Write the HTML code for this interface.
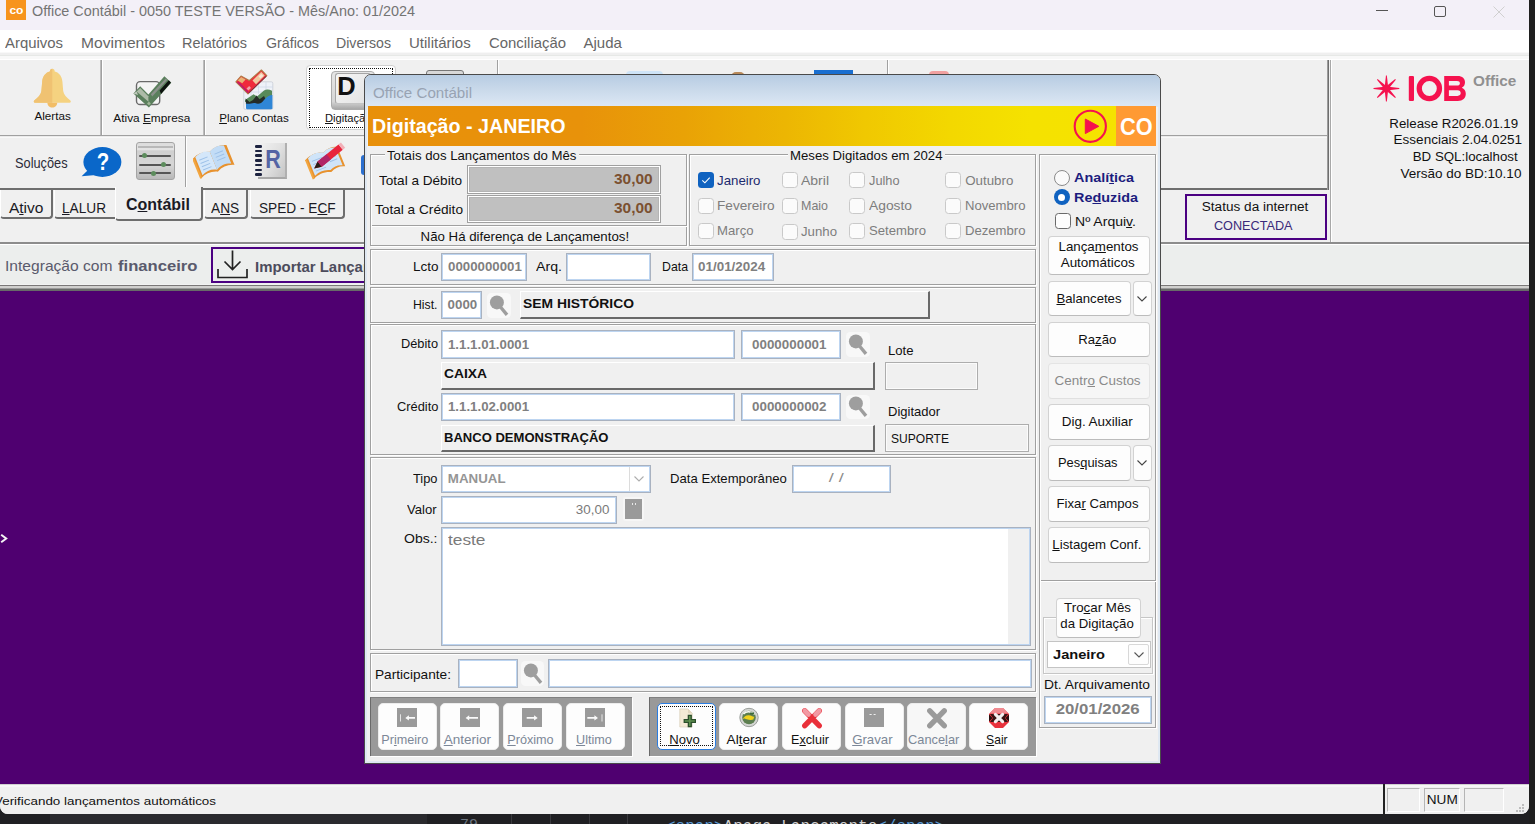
<!DOCTYPE html>
<html><head><meta charset="utf-8"><title>Office Contábil</title><style>
html,body{margin:0;padding:0;background:#1f1f1f;}
body{width:1535px;height:824px;position:relative;overflow:hidden;font-family:"Liberation Sans",sans-serif;}
div,span.t,svg.a{position:absolute;box-sizing:border-box;}
span.t{white-space:nowrap;display:block;}
u{text-decoration:underline;text-underline-offset:1px}
</style></head><body>
<div style="left:0px;top:0px;width:1535px;height:824px;background:#1f1f1f"></div>
<div style="left:0px;top:806px;width:1529px;height:18px;background:#202023"></div>
<div style="left:50px;top:806px;width:377px;height:18px;background:#2a2a2e"></div>
<div style="left:511px;top:806px;width:1px;height:18px;background:#3a3a3e"></div>
<div style="left:550px;top:806px;width:1px;height:18px;background:#3a3a3e"></div>
<div style="left:589px;top:806px;width:1px;height:18px;background:#3a3a3e"></div>
<div style="left:627px;top:806px;width:1px;height:18px;background:#3a3a3e"></div>
<div style="left:655px;top:814px;width:300px;height:10px;overflow:hidden"><span style="position:absolute;left:11px;top:4px;font:16px/18px 'Liberation Mono',monospace;white-space:nowrap;color:#d0d0d0"><span style="color:#5b9bd5">&lt;span&gt;</span>Apaga Lançamento<span style="color:#5b9bd5">&lt;/span&gt;</span></span></div>
<div style="left:455px;top:814px;width:30px;height:10px;overflow:hidden"><span style="position:absolute;left:5px;top:3px;font:15px/18px 'Liberation Mono',monospace;color:#6e7681">79</span></div>
<div style="left:0px;top:0px;width:1529px;height:814px;background:#f0f0f0;border-radius:0 0 8px 8px;overflow:hidden"></div>
<div style="left:0px;top:0px;width:1529px;height:30px;background:#f3f0f8"></div>
<div style="left:6px;top:0px;width:20px;height:20px;background:#f7941d"></div>
<span class="t" style="top:3.00px;font-size:11px;line-height:14px;color:#fff;font-weight:700;left:9.58px;transform:scaleX(1.0900);transform-origin:50% 50%;">co</span>
<span class="t" style="top:0.80px;font-size:15px;line-height:19px;color:#747474;left:32px;transform:scaleX(0.9604);transform-origin:0 50%;">Office Contábil - 0050 TESTE VERSÃO - Mês/Ano: 01/2024</span>
<div style="left:1376px;top:10px;width:12px;height:1px;background:#555"></div>
<div style="left:1434px;top:5.5px;width:11.5px;height:11.5px;border:1px solid #555;border-radius:2px"></div>
<svg class="a" style="left:1493px;top:5.500px" width="12" height="12"><path d="M0.5 0.5L11.5 11.5M11.5 0.5L0.5 11.5" stroke="#d0d0d0" stroke-width="1" fill="none"/></svg>
<div style="left:0px;top:30px;width:1529px;height:22px;background:#fff"></div>
<div style="left:0px;top:52px;width:1529px;height:1px;background:#f8f8f8"></div>
<div style="left:0px;top:53px;width:1529px;height:2px;background:#efefef"></div>
<div style="left:0px;top:55px;width:1529px;height:1px;background:#e6e8e6"></div>
<div style="left:0px;top:56px;width:1529px;height:3px;background:#f8f8f8"></div>
<div style="left:0px;top:59px;width:1529px;height:1px;background:#fff"></div>
<span class="t" style="top:32.70px;font-size:15px;line-height:19px;color:#666;left:5px;transform:scaleX(0.9938);transform-origin:0 50%;">Arquivos</span>
<span class="t" style="top:32.70px;font-size:15px;line-height:19px;color:#666;left:81px;transform:scaleX(1.0388);transform-origin:0 50%;">Movimentos</span>
<span class="t" style="top:32.70px;font-size:15px;line-height:19px;color:#666;left:182px;transform:scaleX(0.9625);transform-origin:0 50%;">Relatórios</span>
<span class="t" style="top:32.70px;font-size:15px;line-height:19px;color:#666;left:265.5px;transform:scaleX(0.9488);transform-origin:0 50%;">Gráficos</span>
<span class="t" style="top:32.70px;font-size:15px;line-height:19px;color:#666;left:336px;transform:scaleX(0.9424);transform-origin:0 50%;">Diversos</span>
<span class="t" style="top:32.70px;font-size:15px;line-height:19px;color:#666;left:409px;">Utilitários</span>
<span class="t" style="top:32.70px;font-size:15px;line-height:19px;color:#666;left:489px;transform:scaleX(0.9929);transform-origin:0 50%;">Conciliação</span>
<span class="t" style="top:32.70px;font-size:15px;line-height:19px;color:#666;left:583.5px;">Ajuda</span>
<div style="left:100px;top:60px;width:1px;height:75px;background:#bcbcbc"></div>
<div style="left:101px;top:60px;width:1px;height:75px;background:#a0a0a0"></div>
<div style="left:102px;top:60px;width:1px;height:76px;background:#fff"></div>
<div style="left:203px;top:60px;width:1px;height:75px;background:#bcbcbc"></div>
<div style="left:204px;top:60px;width:1px;height:75px;background:#a0a0a0"></div>
<div style="left:205px;top:60px;width:1px;height:76px;background:#fff"></div>
<div style="left:0px;top:135px;width:1327px;height:1px;background:#a0a0a0"></div>
<div style="left:0px;top:136px;width:1327px;height:1px;background:#ebebeb"></div>
<div style="left:0px;top:137px;width:1327px;height:1px;background:#f8f8f8"></div>
<div style="left:185px;top:136px;width:1px;height:51px;background:#a0a0a0"></div>
<div style="left:186px;top:136px;width:1px;height:51px;background:#fff"></div>
<div style="left:186px;top:188px;width:1143px;height:2px;background:#6e6e6e"></div>
<div style="left:1327px;top:60px;width:1px;height:130px;background:#9c9c9c"></div>
<div style="left:1328px;top:60px;width:1px;height:130px;background:#6e6e6e"></div>
<div style="left:1330px;top:60px;width:1px;height:182px;background:#a8a8a8"></div>
<div style="left:1331px;top:60px;width:1px;height:182px;background:#fff"></div>
<div style="left:0px;top:242px;width:1529px;height:2px;background:#8c8c8c"></div>
<div style="left:0px;top:244px;width:1529px;height:1px;background:#fff"></div>
<div style="left:0px;top:245px;width:1529px;height:39px;background:#eceeed"></div>
<div style="left:0px;top:284px;width:1529px;height:1px;background:#f2f3f3"></div>
<div style="left:0px;top:285px;width:1529px;height:1px;background:#7a7878"></div>
<div style="left:0px;top:286px;width:1529px;height:2px;background:#d0d0ce"></div>
<div style="left:0px;top:288px;width:1529px;height:1px;background:#9a9a9a"></div>
<div style="left:0px;top:289px;width:1529px;height:2px;background:#686a68"></div>
<div style="left:0px;top:291px;width:1529px;height:493px;background:#4f0070"></div>
<div style="left:0px;top:784px;width:1529px;height:30px;background:#f0f0f0;border-radius:0 0 8px 8px"></div>
<div style="left:0px;top:784px;width:1529px;height:1px;background:#cfcfcf"></div>
<div style="left:0px;top:785px;width:1529px;height:2px;background:#f6f6f6"></div>
<svg class="a" style="left:33px;top:68px" width="39" height="40" viewBox="0 0 39 40">
<path d="M19.300 0.800c1.500 0 2.400 1 2.400 2.600c4.600 1.200 7.300 5 7.700 10.200l0.800 9.500c0.400 3.600 3.400 6.700 7.200 9.400c0.800 0.800 0.400 2.200-0.800 2.200H2c-1.200 0-1.600-1.400-0.800-2.200c3.800-2.700 6.800-5.800 7.200-9.400l0.800-9.500c0.400-5.200 3.100-9 7.700-10.200c0-1.600 0.900-2.600 2.400-2.600z" fill="#f5d280"/>
<path d="M19.300 0.800c-1.500 0-2.400 1-2.400 2.600c-4.600 1.200-7.300 5-7.700 10.200l-0.800 9.500c-0.400 3.600-3.400 6.700-7.200 9.400c-0.800 0.800-0.400 2.200 0.800 2.200H19.300z" fill="#f0c272"/>
<path d="M14.400 34.700h9.800c0 2.800-2.200 4.800-4.900 4.800s-4.900-2-4.900-4.800z" fill="#f2bd66"/></svg>
<span class="t" style="top:109.00px;font-size:11.33px;line-height:14px;color:#111;left:35.17px;transform:scaleX(1.0293);transform-origin:50% 50%;">Alertas</span>
<svg class="a" style="left:132px;top:76px" width="42" height="33" viewBox="0 0 42 33">
<rect x="4.500" y="5.600" width="23.200" height="22.900" rx="3.600" fill="#f4f4f4" stroke="#6a6a6a" stroke-width="1.400"/>
<path d="M1.400 17.400L8.200 10.300L16.400 18.500L32.400 0.300L39.300 6.700L16.900 31.500z" fill="#5a7f5c"/>
<path d="M27.600 14.400L36.800 4.200L38.900 6.600L29.100 18z" fill="#0c120e"/>
<path d="M18.900 18.200L33.700 2.400L35.200 3.900L20.200 20.400z" fill="#8b918b"/>
<path d="M4.600 15.600L8.200 12L16.300 20.200L16.500 25.800z" fill="#aebba8"/>
<path d="M1.400 17.400L4.600 15.600L6 19z" fill="#c0c8bc"/>
<path d="M15 27.500L17 25.500L18.800 27.500L17 29.500z" fill="#9fb596"/></svg>
<span class="t" style="top:111.30px;font-size:11.33px;line-height:14px;color:#111;left:115.36px;transform:scaleX(1.0450);transform-origin:50% 50%;">Ativa <u>E</u>mpresa</span>
<svg class="a" style="left:234px;top:68.8px" width="41" height="42" viewBox="0 0 41 42">
<rect x="9.800" y="12.800" width="29" height="27.600" rx="1.500" fill="#eef2f8" stroke="#c9cdd6" stroke-width="0.800"/>
<path d="M10 18h29M10 23h29M17 13v14M24.500 13v12M32 13v9" stroke="#cfd9e8" stroke-width="0.800"/>
<path d="M11 31L19.500 25.200L23 27.500L30 21.500C32 20 35 20 38 21.800V33H11z" fill="#578a5a"/>
<path d="M11.600 29.500L15.500 33L19 31L22.500 26.500L25.500 30.200L30 27L32 31L24 37.500L12 36z" fill="#242c28"/>
<path d="M12 34.600C16 35.500 18 33.500 21 34C24 35.500 27 35 30 31C33 27.500 35.500 26 38.400 26V39C38.400 39.800 38 40.200 37.200 40.200H13.200C12.400 40.200 12 39.800 12 39z" fill="#2f86d6"/>
<path d="M1.900 12.800L7 7L15.200 11.600L27.400 1L32.800 6.700L14 24.900z" fill="#f02a3c" stroke="#b07a44" stroke-width="1.100" stroke-linejoin="round"/>
<path d="M2.400 13L5.600 13.600L14.200 22.200L14 24.300z" fill="#c01a6c"/>
<path d="M14.600 23.600L32 7l0.500 0.500L14.600 24.600z" fill="#7a1040"/>
<path d="M3.800 11.400L7.100 8L11.600 10.600L8.200 14.200z" fill="#e9b477"/>
<path d="M18.500 11.600L27.300 2.800L30.800 6.500L22 15.200z" fill="#f0c8a0"/>
<path d="M24.500 7.500l2.800-2.700l2 2.100-2.800 2.700z" fill="#f8ead8"/>
<path d="M12.500 19.500l2.700-2.500l1.800 1.900-2.700 2.500z" fill="#f2a0a8"/></svg>
<span class="t" style="top:111.30px;font-size:11.33px;line-height:14px;color:#111;left:220.48px;transform:scaleX(1.0245);transform-origin:50% 50%;"><u>P</u>lano Contas</span>
<div style="left:305.5px;top:64.8px;width:90px;height:65.7px;background:#fff;border:1px solid #d0d0d0;border-radius:4px"></div>
<div style="left:308.5px;top:68px;width:84px;height:59.5px;border:1px dotted #111"></div>
<div style="left:331px;top:70.5px;width:44px;height:39px;background:linear-gradient(180deg,#e6e6e6,#d6d6d6 80%,#a8a8a8);border-radius:4px;border:1px solid #ababab"></div>
<div style="left:335px;top:72.5px;width:36px;height:31px;background:linear-gradient(135deg,#f6f6f6,#e2e2e2);border-radius:3px;border:1px solid #a6a6a6;border-bottom-color:#c4c4c4;border-right-color:#c4c4c4"></div>
<span class="t" style="top:69.50px;font-size:26.5px;line-height:33px;color:#111;font-weight:700;left:337.33px;transform:scaleX(0.9613);transform-origin:50% 50%;">D</span>
<span class="t" style="top:111.30px;font-size:11.33px;line-height:14px;color:#111;left:325.2px;transform:scaleX(0.9845);transform-origin:0 50%;"><u>D</u>igitação</span>
<div style="left:426px;top:70px;width:38px;height:8px;border:1.500px solid #777;border-radius:3px;background:#d8d8d8"></div>
<div style="left:626px;top:70.5px;width:37px;height:8px;background:#cfe4f7;border-radius:4px 4px 0 0"></div>
<div style="left:731px;top:71.5px;width:14px;height:6px;background:#b98a5a;border-radius:5px 5px 0 0"></div>
<div style="left:814px;top:69.5px;width:39px;height:8px;background:#1a6fd0"></div>
<div style="left:928.5px;top:71px;width:20px;height:7px;background:#f0a0a0;border-radius:4px 4px 0 0"></div>
<div style="left:497px;top:60px;width:1px;height:75px;background:#a0a0a0"></div>
<div style="left:498px;top:60px;width:1px;height:75px;background:#fff"></div>
<div style="left:887px;top:60px;width:1px;height:75px;background:#a0a0a0"></div>
<div style="left:888px;top:60px;width:1px;height:75px;background:#fff"></div>
<span class="t" style="top:153.60px;font-size:14px;line-height:18px;color:#2b2b38;left:15px;transform:scaleX(0.9133);transform-origin:0 50%;">Soluções</span>
<svg class="a" style="left:80px;top:146px" width="43" height="33" viewBox="0 0 43 33">
<ellipse cx="22.400" cy="16" rx="19" ry="15" fill="#0a67c9"/>
<path d="M8 24L1.600 30.300L16 29z" fill="#0a67c9"/></svg>
<span class="t" style="top:147.80px;font-size:23px;line-height:29px;color:#fff;font-weight:700;left:95.57px;transform:scaleX(0.8889);transform-origin:50% 50%;">?</span>
<div style="left:135.5px;top:141.5px;width:39px;height:38.5px;background:linear-gradient(180deg,#dcdcdc 0,#e4e4e4 18%,#cfcfcf 22%,#d6d6d6 60%,#b8b8b8 100%);border:1px solid #a4a4a4;border-radius:3px"></div>
<div style="left:137.5px;top:145.5px;width:35px;height:2px;background:#b9b9b9"></div>
<div style="left:139.2px;top:154.8px;width:31.6px;height:2px;background:#555;border-radius:1px"></div>
<div style="left:141.6px;top:153.20000000000002px;width:5.2px;height:5.2px;background:#5c8c5c;border-radius:50%"></div>
<div style="left:139.2px;top:163.7px;width:31.6px;height:2px;background:#555;border-radius:1px"></div>
<div style="left:160.8px;top:162.1px;width:5.2px;height:5.2px;background:#5c8c5c;border-radius:50%"></div>
<div style="left:139.2px;top:172.1px;width:31.6px;height:2px;background:#555;border-radius:1px"></div>
<div style="left:150.9px;top:170.5px;width:5.2px;height:5.2px;background:#5c8c5c;border-radius:50%"></div>
<svg class="a" style="left:193px;top:142px" width="44" height="40" viewBox="0 0 44 40">
<g transform="rotate(-22 22 20)">
<path d="M3 8.500c6-3 12-3 18 0c6-3 12-3 18 0V30c-6-3-12-3-18 0c-6-3-12-3-18 0z" fill="#e8922e"/>
<path d="M5.500 8c5.500-2.500 10.500-2.500 15.500 0.500V28c-5-3-10-3-15.500-0.500z" fill="#d4e7fa"/>
<path d="M21 8.500c5-3 10-3 15.500-0.500V27.500c-5.500-2.500-10.500-2.500-15.500 0.500z" fill="#c2dcf6"/>
<path d="M8 12.500h9M8 16h9M8 19.500h9M8 23h9M24.500 12.500h9M24.500 16h9M24.500 19.500h9" stroke="#9cc0e8" stroke-width="0.9"/>
<path d="M3 8.500V30" stroke="#f2a640" stroke-width="2"/>
</g></svg>
<div style="left:258px;top:142.5px;width:29px;height:36.5px;background:linear-gradient(120deg,#f2f2f2 0,#e0e0e0 55%,#c4c4c4 100%);border-right:2px solid #b0b0b0;border-bottom:2px solid #a8a8a8"></div>
<div style="left:254.7px;top:145.0px;width:7.5px;height:2.6px;background:#1d2340;border-radius:1.3px"></div>
<div style="left:254.7px;top:149.7px;width:7.5px;height:2.6px;background:#1d2340;border-radius:1.3px"></div>
<div style="left:254.7px;top:154.4px;width:7.5px;height:2.6px;background:#1d2340;border-radius:1.3px"></div>
<div style="left:254.7px;top:159.1px;width:7.5px;height:2.6px;background:#1d2340;border-radius:1.3px"></div>
<div style="left:254.7px;top:163.8px;width:7.5px;height:2.6px;background:#1d2340;border-radius:1.3px"></div>
<div style="left:254.7px;top:168.5px;width:7.5px;height:2.6px;background:#1d2340;border-radius:1.3px"></div>
<div style="left:254.7px;top:173.2px;width:7.5px;height:2.6px;background:#1d2340;border-radius:1.3px"></div>
<span class="t" style="top:143.90px;font-size:25px;line-height:31px;color:#5464a4;font-weight:700;left:263.97px;transform:scaleX(0.8581);transform-origin:50% 50%;">R</span>
<svg class="a" style="left:304.5px;top:139.5px" width="45" height="43" viewBox="0 0 45 43">
<g transform="rotate(-22 22 24)">
<path d="M4 12c6-3 13-3 19 0c5-2.500 10-2.500 15 0V33c-5-2.500-10-2.500-15 0c-6-3-13-3-19 0z" fill="#e8922e"/>
<path d="M6.500 11.500c5.500-2.500 11-2.500 16.500 0.500c4.500-2.300 8.500-2.300 13 0V31c-4.500-2.300-8.500-2.300-13 0c-5.500-3-11-3-16.500-0.500z" fill="#cfe4f9"/>
<path d="M9 16h11M9 19.500h11M9 23h11M9 26.500h11M25.500 19.500h8M25.500 23h8" stroke="#9cc0e8" stroke-width="0.9"/>
<path d="M4 12V33" stroke="#f2a640" stroke-width="2"/>
</g>
<path d="M9.200 28.500L12.600 21.500L33.500 4.500L37.800 9.800L16.800 26.800z" fill="#e8243c"/>
<path d="M9.200 28.500L12.600 21.500L16.800 26.800z" fill="#2a2018"/>
<path d="M12.600 21.500l9-7.300l4.200 5.300-9 7.300z" fill="#b02468"/>
<path d="M33.500 4.500l2.400-2l4.300 5.300-2.400 2z" fill="#f2b0b8"/></svg>
<div style="left:360.5px;top:154.5px;width:6px;height:20px;background:#2a6fd0;border-radius:3px 0 0 3px"></div>
<div style="left:0px;top:188px;width:114.5px;height:2px;background:#6e6e6e"></div>
<div style="left:0px;top:190px;width:52.5px;height:28.5px;background:#f0f0f0;border-right:2px solid #6e6e6e;border-bottom:2px solid #6e6e6e;border-left:1px solid #fff;border-radius:0 0 4px 4px;"></div>
<div style="left:54px;top:190px;width:60.5px;height:28.5px;background:#f0f0f0;border-bottom:2px solid #6e6e6e;border-left:1px solid #fff;border-radius:0 0 0 4px"></div>
<div style="left:204px;top:190px;width:44px;height:28.5px;background:#f0f0f0;border-right:2px solid #6e6e6e;border-bottom:2px solid #6e6e6e;border-left:1px solid #fff;border-radius:0 0 4px 4px;"></div>
<div style="left:250px;top:190px;width:94.5px;height:28.5px;background:#f0f0f0;border-right:2px solid #6e6e6e;border-bottom:2px solid #6e6e6e;border-left:1px solid #fff;border-radius:0 0 4px 4px;"></div>
<div style="left:114.5px;top:187px;width:88.5px;height:34px;background:#f0f0f0;border-right:2px solid #6e6e6e;border-bottom:2px solid #6e6e6e;border-left:1px solid #fff;border-radius:0 0 4px 4px"></div>
<span class="t" style="top:197.50px;font-size:15.5px;line-height:19px;color:#1a1a24;left:8.9px;">A<u>t</u>ivo</span>
<span class="t" style="top:197.50px;font-size:15.5px;line-height:19px;color:#1a1a24;left:62px;transform:scaleX(0.8803);transform-origin:0 50%;"><u>L</u>ALUR</span>
<span class="t" style="top:194.60px;font-size:16px;line-height:20px;color:#1a1a24;font-weight:700;left:126px;">C<u>o</u>ntábil</span>
<span class="t" style="top:197.50px;font-size:15.5px;line-height:19px;color:#1a1a24;left:211px;transform:scaleX(0.8843);transform-origin:0 50%;">A<u>N</u>S</span>
<span class="t" style="top:197.50px;font-size:15.5px;line-height:19px;color:#1a1a24;left:258.7px;transform:scaleX(0.8816);transform-origin:0 50%;">SPED - E<u>C</u>F</span>
<span class="t" style="top:255.50px;font-size:15px;line-height:19px;color:#5a5a6c;left:5px;transform:scaleX(1.0397);transform-origin:0 50%;">Integração com</span>
<span class="t" style="top:255.50px;font-size:15px;line-height:19px;color:#5a5a6c;font-weight:700;left:117.8px;transform:scaleX(1.1090);transform-origin:0 50%;">financeiro</span>
<div style="left:211px;top:247px;width:200px;height:35.5px;border:2px solid #4b0082;background:#eceeed"></div>
<svg class="a" style="left:217px;top:249px" width="31" height="30" viewBox="0 0 31 30"><path d="M15.5 1.500V20M7.500 12.500L15.500 20.500L23.500 12.500" stroke="#222" stroke-width="1.700" fill="none"/><path d="M1 20V28.500H30V20" stroke="#222" stroke-width="1.700" fill="none"/></svg>
<span class="t" style="top:256.50px;font-size:15px;line-height:19px;color:#4c4c5c;font-weight:700;left:254.5px;transform:scaleX(0.9956);transform-origin:0 50%;">Importar Lançamentos</span>
<svg class="a" style="left:1372px;top:74px" width="30" height="30" viewBox="0 0 30 30"><g transform="translate(14.400 14.500)" fill="#f5124e"><path d="M-1.900 0L-0.450 -12.900L0.450 -12.900L1.900 0z" transform="rotate(0)"/><path d="M-1.900 0L-0.450 -12.900L0.450 -12.900L1.900 0z" transform="rotate(45)"/><path d="M-1.900 0L-0.450 -12.900L0.450 -12.900L1.900 0z" transform="rotate(90)"/><path d="M-1.900 0L-0.450 -12.900L0.450 -12.900L1.900 0z" transform="rotate(135)"/><path d="M-1.900 0L-0.450 -12.900L0.450 -12.900L1.900 0z" transform="rotate(180)"/><path d="M-1.900 0L-0.450 -12.900L0.450 -12.900L1.900 0z" transform="rotate(225)"/><path d="M-1.900 0L-0.450 -12.900L0.450 -12.900L1.900 0z" transform="rotate(270)"/><path d="M-1.900 0L-0.450 -12.900L0.450 -12.900L1.900 0z" transform="rotate(315)"/><circle r="2.600"/></g></svg>
<svg class="a" style="left:1408px;top:75px" width="60" height="27" viewBox="0 0 60 27"><g fill="#f5124e"><rect x="0.800" y="0.900" width="5.200" height="25.100" rx="1.200"/><path fill-rule="evenodd" d="M36.200 0.900H49.500C54.500 0.900 57 3.500 57 7.300C57 10 55.800 11.800 53.800 12.800C56.300 13.800 57.800 15.800 57.800 18.800C57.800 23.300 54.800 26 49.800 26H36.200zM40.900 5.900H49C50.800 5.900 51.900 6.800 51.900 8.200C51.900 9.600 50.800 10.500 49 10.500H40.900zM40.900 15.300H49.500C51.600 15.300 52.700 16.400 52.700 18.100C52.700 19.800 51.600 20.900 49.500 20.900H40.900z"/></g><circle cx="21.350" cy="13.450" r="10.100" fill="none" stroke="#f5124e" stroke-width="5.300"/></svg>
<span class="t" style="top:72.80px;font-size:13.8px;line-height:17px;color:#909090;font-weight:700;left:1472.9px;transform:scaleX(1.1097);transform-origin:0 50%;">Office</span>
<span class="t" style="top:116.80px;font-size:12px;line-height:15px;color:#111;left:1401.71px;transform:scaleX(1.1094);transform-origin:100% 50%;">Release R2026.01.19</span>
<span class="t" style="top:133.00px;font-size:12px;line-height:15px;color:#111;left:1407.92px;transform:scaleX(1.1264);transform-origin:100% 50%;">Essenciais 2.04.0251</span>
<span class="t" style="top:149.90px;font-size:12px;line-height:15px;color:#111;left:1423.08px;transform:scaleX(1.1085);transform-origin:100% 50%;">BD SQL:localhost</span>
<span class="t" style="top:166.50px;font-size:12px;line-height:15px;color:#111;left:1414.08px;transform:scaleX(1.1264);transform-origin:100% 50%;">Versão do BD:10.10</span>
<div style="left:1185px;top:194.3px;width:141.5px;height:46px;border:2px solid #4b0082;background:#f0f0f0"></div>
<span class="t" style="top:200.00px;font-size:12px;line-height:15px;color:#111;left:1207.97px;transform:scaleX(1.1322);transform-origin:50% 50%;">Status da internet</span>
<span class="t" style="top:218.50px;font-size:12px;line-height:15px;color:#3a2a7a;left:1216.27px;transform:scaleX(1.0544);transform-origin:50% 50%;">CONECTADA</span>
<span class="t" style="top:794.00px;font-size:11.5px;line-height:14px;color:#111;left:-6px;transform:scaleX(1.1654);transform-origin:0 50%;">Verificando lançamentos automáticos</span>
<div style="left:1383px;top:784px;width:1.5px;height:30px;background:#222"></div>
<div style="left:1386.5px;top:787.5px;width:33.5px;height:24px;border-left:1px solid #b5b5b5;border-top:1px solid #b5b5b5;border-right:1px solid #fff;border-bottom:1px solid #fff;background:#f0f0f0"></div>
<div style="left:1423.5px;top:787.5px;width:36.5px;height:24px;border-left:1px solid #b5b5b5;border-top:1px solid #b5b5b5;border-right:1px solid #fff;border-bottom:1px solid #fff;background:#f0f0f0"></div>
<div style="left:1464px;top:787.5px;width:40px;height:24px;border-left:1px solid #b5b5b5;border-top:1px solid #b5b5b5;border-right:1px solid #fff;border-bottom:1px solid #fff;background:#f0f0f0"></div>
<span class="t" style="top:791.60px;font-size:12.5px;line-height:16px;color:#111;left:1427.57px;transform:scaleX(1.0889);transform-origin:50% 50%;">NUM</span>
<div style="left:1522px;top:810px;width:2px;height:2px;background:#bdbdbd"></div>
<div style="left:1519px;top:810px;width:2px;height:2px;background:#bdbdbd"></div>
<div style="left:1516px;top:810px;width:2px;height:2px;background:#bdbdbd"></div>
<div style="left:1522px;top:807px;width:2px;height:2px;background:#bdbdbd"></div>
<div style="left:1519px;top:807px;width:2px;height:2px;background:#bdbdbd"></div>
<div style="left:1522px;top:804px;width:2px;height:2px;background:#bdbdbd"></div>
<svg class="a" style="left:0px;top:533px" width="9" height="11" viewBox="0 0 9 11"><path d="M1.200 1.800L6.200 5.500L1.200 9.200" stroke="#f4f4f4" stroke-width="2" fill="none"/></svg>
<div style="left:364px;top:74px;width:797px;height:689.5px;background:#f0f0f0;border:1px solid #4a4a4a;border-radius:7px 7px 0 0;box-shadow:inset 0 0 0 2px #dfe8f2"></div>
<div style="left:365px;top:75px;width:795px;height:31.5px;background:linear-gradient(180deg,#b7cce3,#c9d9ea 45%,#dde8f5);border-radius:6px 6px 0 0"></div>
<span class="t" style="top:82.80px;font-size:15px;line-height:19px;color:#98a3b3;left:373px;transform:scaleX(1.0091);transform-origin:0 50%;">Office Contábil</span>
<div style="left:367.5px;top:106px;width:788.5px;height:40px;background:linear-gradient(90deg,#e8900a 0%,#e8920a 27%,#e9a206 40%,#ecb603 53%,#f0c801 63%,#f3d800 74%,#f5e200 84%,#f5e300 100%)"></div>
<span class="t" style="top:113.50px;font-size:20px;line-height:25px;color:#fff;font-weight:700;left:371.5px;transform:scaleX(0.9837);transform-origin:0 50%;">Digitação - JANEIRO</span>
<div style="left:1116px;top:106px;width:40px;height:40px;background:#ff9a33"></div>
<span class="t" style="top:111.60px;font-size:24.4px;line-height:30px;color:#fff;font-weight:700;left:1117.90px;transform:scaleX(0.8909);transform-origin:50% 50%;">CO</span>
<svg class="a" style="left:1072px;top:108px" width="36" height="36" viewBox="0 0 36 36"><circle cx="18.300" cy="18.300" r="15.600" fill="none" stroke="#f5124e" stroke-width="2.100"/><path d="M13.300 11V25.600L26.800 18.300z" fill="#f5124e" stroke="#f5124e" stroke-width="1" stroke-linejoin="round"/></svg>
<div style="left:370px;top:154px;width:317px;height:92px;border:1px solid #a0a0a0;box-shadow:1px 1px 0 #fff,inset 1px 1px 0 #fff;"></div>
<div style="left:385px;top:148px;width:194px;height:14px;background:#f0f0f0"></div>
<span class="t" style="top:146.70px;font-size:13.33px;line-height:17px;color:#111;left:387px;transform:scaleX(0.9913);transform-origin:0 50%;">Totais dos Lançamentos do Mês</span>
<span class="t" style="top:171.50px;font-size:13.33px;line-height:17px;color:#111;left:378.5px;transform:scaleX(1.0184);transform-origin:0 50%;">Total a Débito</span>
<span class="t" style="top:200.50px;font-size:13.33px;line-height:17px;color:#111;left:375px;transform:scaleX(1.0240);transform-origin:0 50%;">Total a Crédito</span>
<div style="left:467px;top:165px;width:193.5px;height:28.5px;border:1px solid #a0a0a0;box-shadow:inset 0 0 0 1px #fff, inset 0 0 0 2px #b4b4b4;background:#c0c0c0"></div>
<span class="t" style="top:169.95px;font-size:14.67px;line-height:18px;color:#7b5030;font-weight:700;left:615.61px;transform:scaleX(1.0549);transform-origin:100% 50%;">30,00</span>
<div style="left:467px;top:194.5px;width:193.5px;height:28.0px;border:1px solid #a0a0a0;box-shadow:inset 0 0 0 1px #fff, inset 0 0 0 2px #b4b4b4;background:#c0c0c0"></div>
<span class="t" style="top:199.20px;font-size:14.67px;line-height:18px;color:#7b5030;font-weight:700;left:615.61px;transform:scaleX(1.0549);transform-origin:100% 50%;">30,00</span>
<div style="left:371.5px;top:225px;width:315px;height:1px;background:#a0a0a0"></div>
<div style="left:371.5px;top:226px;width:315px;height:1px;background:#fff"></div>
<span class="t" style="top:227.80px;font-size:13.33px;line-height:17px;color:#111;left:419.86px;transform:scaleX(0.9943);transform-origin:50% 50%;">Não Há diferença de Lançamentos!</span>
<div style="left:689px;top:154px;width:347px;height:92px;border:1px solid #a0a0a0;box-shadow:1px 1px 0 #fff,inset 1px 1px 0 #fff;"></div>
<div style="left:788px;top:148px;width:157px;height:14px;background:#f0f0f0"></div>
<span class="t" style="top:146.70px;font-size:13.33px;line-height:17px;color:#111;left:790px;transform:scaleX(0.9897);transform-origin:0 50%;">Meses Digitados em 2024</span>
<div style="left:697.6px;top:172px;width:16px;height:16px;background:#0f62c0;border-radius:3.500px"></div>
<svg class="a" style="left:697.6px;top:172px" width="16" height="16" viewBox="0 0 16 16"><path d="M4.300 8.300L6.900 10.800L11.700 5.600" stroke="#fff" stroke-width="1.100" fill="none"/></svg>
<span class="t" style="top:171.60px;font-size:13.33px;line-height:17px;color:#1c2a6e;left:717.3px;transform:scaleX(0.9950);transform-origin:0 50%;">Janeiro</span>
<div style="left:697.6px;top:197.5px;width:16px;height:16px;background:#fbfbfb;border:1px solid #c9c9c9;border-radius:3.500px"></div>
<span class="t" style="top:197.10px;font-size:13.33px;line-height:17px;color:#7d7d7d;left:717.3px;transform:scaleX(1.0214);transform-origin:0 50%;">Fevereiro</span>
<div style="left:697.6px;top:222.5px;width:16px;height:16px;background:#fbfbfb;border:1px solid #c9c9c9;border-radius:3.500px"></div>
<span class="t" style="top:222.10px;font-size:13.33px;line-height:17px;color:#7d7d7d;left:717.3px;transform:scaleX(0.9857);transform-origin:0 50%;">Março</span>
<div style="left:781.6px;top:172px;width:16px;height:16px;background:#fbfbfb;border:1px solid #c9c9c9;border-radius:3.500px"></div>
<span class="t" style="top:171.60px;font-size:13.33px;line-height:17px;color:#7d7d7d;left:801.2px;transform:scaleX(1.0498);transform-origin:0 50%;">Abril</span>
<div style="left:781.6px;top:197.5px;width:16px;height:16px;background:#fbfbfb;border:1px solid #c9c9c9;border-radius:3.500px"></div>
<span class="t" style="top:197.10px;font-size:13.33px;line-height:17px;color:#7d7d7d;left:801.2px;transform:scaleX(0.9346);transform-origin:0 50%;">Maio</span>
<div style="left:781.6px;top:223.5px;width:16px;height:16px;background:#fbfbfb;border:1px solid #c9c9c9;border-radius:3.500px"></div>
<span class="t" style="top:223.10px;font-size:13.33px;line-height:17px;color:#7d7d7d;left:801.2px;transform:scaleX(0.9910);transform-origin:0 50%;">Junho</span>
<div style="left:848.7px;top:172px;width:16px;height:16px;background:#fbfbfb;border:1px solid #c9c9c9;border-radius:3.500px"></div>
<span class="t" style="top:171.60px;font-size:13.33px;line-height:17px;color:#7d7d7d;left:868.7px;transform:scaleX(0.9569);transform-origin:0 50%;">Julho</span>
<div style="left:848.7px;top:197.5px;width:16px;height:16px;background:#fbfbfb;border:1px solid #c9c9c9;border-radius:3.500px"></div>
<span class="t" style="top:197.10px;font-size:13.33px;line-height:17px;color:#7d7d7d;left:868.7px;transform:scaleX(1.0361);transform-origin:0 50%;">Agosto</span>
<div style="left:848.7px;top:222.5px;width:16px;height:16px;background:#fbfbfb;border:1px solid #c9c9c9;border-radius:3.500px"></div>
<span class="t" style="top:222.10px;font-size:13.33px;line-height:17px;color:#7d7d7d;left:868.7px;transform:scaleX(0.9862);transform-origin:0 50%;">Setembro</span>
<div style="left:945.2px;top:172px;width:16px;height:16px;background:#fbfbfb;border:1px solid #c9c9c9;border-radius:3.500px"></div>
<span class="t" style="top:171.60px;font-size:13.33px;line-height:17px;color:#7d7d7d;left:965.2px;">Outubro</span>
<div style="left:945.2px;top:197.5px;width:16px;height:16px;background:#fbfbfb;border:1px solid #c9c9c9;border-radius:3.500px"></div>
<span class="t" style="top:197.10px;font-size:13.33px;line-height:17px;color:#7d7d7d;left:965.2px;transform:scaleX(0.9840);transform-origin:0 50%;">Novembro</span>
<div style="left:945.2px;top:222.5px;width:16px;height:16px;background:#fbfbfb;border:1px solid #c9c9c9;border-radius:3.500px"></div>
<span class="t" style="top:222.10px;font-size:13.33px;line-height:17px;color:#7d7d7d;left:965.2px;transform:scaleX(0.9840);transform-origin:0 50%;">Dezembro</span>
<div style="left:370px;top:249px;width:666px;height:36px;border:1px solid #a0a0a0;box-shadow:1px 1px 0 #fff,inset 1px 1px 0 #fff;"></div>
<span class="t" style="top:258.10px;font-size:13.33px;line-height:17px;color:#111;left:412.5px;transform:scaleX(1.0118);transform-origin:0 50%;">Lcto</span>
<div style="left:441px;top:253px;width:86px;height:28px;border:1px solid #a9b2c0;box-shadow:inset 0 0 0 1px #bdd5f1;background:#fff;"></div>
<span class="t" style="top:258.30px;font-size:13.33px;line-height:17px;color:#808080;font-weight:700;left:447.6px;transform:scaleX(0.9956);transform-origin:0 50%;">0000000001</span>
<span class="t" style="top:258.10px;font-size:13.33px;line-height:17px;color:#111;left:536px;transform:scaleX(1.0633);transform-origin:0 50%;">Arq.</span>
<div style="left:565.5px;top:253px;width:85.0px;height:28px;border:1px solid #a9b2c0;box-shadow:inset 0 0 0 1px #bdd5f1;background:#fff;"></div>
<span class="t" style="top:258.10px;font-size:13.33px;line-height:17px;color:#111;left:661.5px;transform:scaleX(0.9234);transform-origin:0 50%;">Data</span>
<div style="left:692px;top:253px;width:81.5px;height:28px;border:1px solid #a9b2c0;box-shadow:inset 0 0 0 1px #bdd5f1;background:#fff;"></div>
<span class="t" style="top:258.30px;font-size:13.33px;line-height:17px;color:#808080;font-weight:700;left:697.7px;transform:scaleX(1.0072);transform-origin:0 50%;">01/01/2024</span>
<div style="left:370px;top:287px;width:666px;height:35.5px;border:1px solid #a0a0a0;box-shadow:1px 1px 0 #fff,inset 1px 1px 0 #fff;"></div>
<span class="t" style="top:295.80px;font-size:13.33px;line-height:17px;color:#111;left:412.5px;transform:scaleX(0.9186);transform-origin:0 50%;">Hist.</span>
<div style="left:441px;top:290.5px;width:41px;height:28.0px;border:1px solid #a9b2c0;box-shadow:inset 0 0 0 1px #bdd5f1;background:#fff;"></div>
<span class="t" style="top:295.80px;font-size:13.33px;line-height:17px;color:#808080;font-weight:700;left:447.6px;">0000</span>
<div style="left:487px;top:293.0px;width:23.5px;height:24.5px;background:#f8f8f8;border-radius:4.500px"></div>
<svg class="a" style="left:487px;top:293.5px" width="23" height="24" viewBox="0 0 23 24"><circle cx="9.900" cy="8.400" r="7" fill="#9e9e9e"/><path d="M13.500 13L20 20.800" stroke="#9e9e9e" stroke-width="3.400" stroke-linecap="butt"/></svg>
<div style="left:520px;top:290.5px;width:410px;height:28.0px;background:#f0f0f0;border-right:2px solid #696969;border-bottom:2px solid #696969;border-top:1px solid #fff;border-left:1px solid #fff"></div>
<span class="t" style="top:295.20px;font-size:13.33px;line-height:17px;color:#111;font-weight:700;left:523px;transform:scaleX(1.0409);transform-origin:0 50%;">SEM HISTÓRICO</span>
<div style="left:370px;top:324px;width:666px;height:131px;border:1px solid #a0a0a0;box-shadow:1px 1px 0 #fff,inset 1px 1px 0 #fff;"></div>
<span class="t" style="top:335.20px;font-size:13.33px;line-height:17px;color:#111;left:401px;transform:scaleX(0.9603);transform-origin:0 50%;">Débito</span>
<div style="left:441px;top:330px;width:293.5px;height:28.5px;border:1px solid #a9b2c0;box-shadow:inset 0 0 0 1px #bdd5f1;background:#fff;"></div>
<span class="t" style="top:335.70px;font-size:13.33px;line-height:17px;color:#808080;font-weight:700;left:447.6px;transform:scaleX(0.9935);transform-origin:0 50%;">1.1.1.01.0001</span>
<div style="left:740.5px;top:330px;width:100.0px;height:28.5px;border:1px solid #a9b2c0;box-shadow:inset 0 0 0 1px #bdd5f1;background:#fff;"></div>
<span class="t" style="top:335.70px;font-size:13.33px;line-height:17px;color:#808080;font-weight:700;left:752.2px;transform:scaleX(1.0051);transform-origin:0 50%;">0000000001</span>
<div style="left:846px;top:332.0px;width:23.5px;height:24.5px;background:#f8f8f8;border-radius:4.500px"></div>
<svg class="a" style="left:846px;top:332.5px" width="23" height="24" viewBox="0 0 23 24"><circle cx="9.900" cy="8.400" r="7" fill="#9e9e9e"/><path d="M13.500 13L20 20.800" stroke="#9e9e9e" stroke-width="3.400" stroke-linecap="butt"/></svg>
<div style="left:441px;top:362px;width:433.5px;height:28px;background:#f0f0f0;border-right:2px solid #696969;border-bottom:2px solid #696969;border-top:1px solid #fff;border-left:1px solid #fff"></div>
<span class="t" style="top:365.30px;font-size:13.33px;line-height:17px;color:#111;font-weight:700;left:444px;transform:scaleX(1.0369);transform-origin:0 50%;">CAIXA</span>
<span class="t" style="top:397.90px;font-size:13.33px;line-height:17px;color:#111;left:396.6px;transform:scaleX(0.9635);transform-origin:0 50%;">Crédito</span>
<div style="left:441px;top:393px;width:293.5px;height:28px;border:1px solid #a9b2c0;box-shadow:inset 0 0 0 1px #bdd5f1;background:#fff;"></div>
<span class="t" style="top:398.40px;font-size:13.33px;line-height:17px;color:#808080;font-weight:700;left:447.6px;transform:scaleX(0.9935);transform-origin:0 50%;">1.1.1.02.0001</span>
<div style="left:740.5px;top:393px;width:100.0px;height:28px;border:1px solid #a9b2c0;box-shadow:inset 0 0 0 1px #bdd5f1;background:#fff;"></div>
<span class="t" style="top:398.40px;font-size:13.33px;line-height:17px;color:#808080;font-weight:700;left:752.2px;transform:scaleX(1.0051);transform-origin:0 50%;">0000000002</span>
<div style="left:846px;top:394.5px;width:23.5px;height:24.5px;background:#f8f8f8;border-radius:4.500px"></div>
<svg class="a" style="left:846px;top:395px" width="23" height="24" viewBox="0 0 23 24"><circle cx="9.900" cy="8.400" r="7" fill="#9e9e9e"/><path d="M13.500 13L20 20.800" stroke="#9e9e9e" stroke-width="3.400" stroke-linecap="butt"/></svg>
<div style="left:441px;top:424.5px;width:433.5px;height:27.5px;background:#f0f0f0;border-right:2px solid #696969;border-bottom:2px solid #696969;border-top:1px solid #fff;border-left:1px solid #fff"></div>
<span class="t" style="top:428.95px;font-size:13.33px;line-height:17px;color:#111;font-weight:700;left:444px;transform:scaleX(0.9786);transform-origin:0 50%;">BANCO DEMONSTRAÇÃO</span>
<span class="t" style="top:342.00px;font-size:13.33px;line-height:17px;color:#111;left:887.8px;transform:scaleX(0.9864);transform-origin:0 50%;">Lote</span>
<div style="left:884.5px;top:362px;width:93px;height:28px;border:1px solid #adadad;box-shadow:inset 0 0 0 1px #fbfbfb;background:#f0f0f0"></div>
<span class="t" style="top:403.20px;font-size:13.33px;line-height:17px;color:#111;left:887.8px;transform:scaleX(0.9748);transform-origin:0 50%;">Digitador</span>
<div style="left:884.5px;top:424px;width:144px;height:28px;border:1px solid #adadad;box-shadow:inset 0 0 0 1px #fbfbfb;background:#f0f0f0"></div>
<span class="t" style="top:429.70px;font-size:13.33px;line-height:17px;color:#111;left:890.5px;transform:scaleX(0.9036);transform-origin:0 50%;">SUPORTE</span>
<div style="left:370px;top:457px;width:666px;height:193px;border:1px solid #a0a0a0;box-shadow:1px 1px 0 #fff,inset 1px 1px 0 #fff;"></div>
<span class="t" style="top:470.30px;font-size:13.33px;line-height:17px;color:#111;left:412.5px;transform:scaleX(0.9631);transform-origin:0 50%;">Tipo</span>
<div style="left:441px;top:464.5px;width:209.5px;height:28.5px;border:1px solid #a9b2c0;box-shadow:inset 0 0 0 1px #bdd5f1;background:#fff;"></div>
<span class="t" style="top:470.30px;font-size:13.33px;line-height:17px;color:#959595;font-weight:700;left:447.8px;">MANUAL</span>
<div style="left:629px;top:466.5px;width:19.5px;height:24.5px;border-left:1px solid #dcdcdc;background:#fff"></div>
<svg class="a" style="left:633px;top:474px" width="12" height="10" viewBox="0 0 12 10"><path d="M1.500 2.500L6 7L10.500 2.500" stroke="#adadad" stroke-width="1.100" fill="none"/></svg>
<span class="t" style="top:470.30px;font-size:13.33px;line-height:17px;color:#111;left:670px;transform:scaleX(0.9853);transform-origin:0 50%;">Data Extemporâneo</span>
<div style="left:791.5px;top:464.5px;width:99.0px;height:28.5px;border:1px solid #a9b2c0;box-shadow:inset 0 0 0 1px #bdd5f1;background:#fff;"></div>
<span class="t" style="top:470.30px;font-size:12.5px;line-height:16px;color:#8a8a8a;left:830.79px;transform:scaleX(1.4393);transform-origin:50% 50%;">/  /</span>
<span class="t" style="top:500.80px;font-size:13.33px;line-height:17px;color:#111;left:407.4px;transform:scaleX(0.9826);transform-origin:0 50%;">Valor</span>
<div style="left:441px;top:496px;width:175.5px;height:27.5px;border:1px solid #a9b2c0;box-shadow:inset 0 0 0 1px #bdd5f1;background:#fff;"></div>
<span class="t" style="top:501.00px;font-size:13.33px;line-height:17px;color:#7a7a7a;left:576.34px;transform:scaleX(1.0042);transform-origin:100% 50%;">30,00</span>
<div style="left:622.5px;top:497px;width:21.5px;height:23.5px;background:#f6f6f6;border-radius:3px"></div>
<div style="left:624.5px;top:499px;width:17.5px;height:19.5px;background:#9a9a9a"></div>
<div style="left:631.5px;top:503px;width:1px;height:1.5px;background:#e8e8e8"></div>
<div style="left:634.5px;top:503px;width:1px;height:1.5px;background:#e8e8e8"></div>
<span class="t" style="top:529.50px;font-size:13.33px;line-height:17px;color:#111;left:404px;transform:scaleX(1.0515);transform-origin:0 50%;">Obs.:</span>
<div style="left:441px;top:527px;width:590px;height:119px;border:1px solid #a9b2c0;box-shadow:inset 0 0 0 1px #bdd5f1;background:#fff;"></div>
<div style="left:1008px;top:529px;width:21px;height:115px;background:#f0f0f0"></div>
<span class="t" style="top:531.20px;font-size:14px;line-height:18px;color:#7a7a7a;left:447.7px;transform:scaleX(1.2352);transform-origin:0 50%;">teste</span>
<div style="left:370px;top:653px;width:666px;height:38.5px;border:1px solid #a0a0a0;box-shadow:1px 1px 0 #fff,inset 1px 1px 0 #fff;"></div>
<span class="t" style="top:665.50px;font-size:13.33px;line-height:17px;color:#111;left:375px;transform:scaleX(1.0257);transform-origin:0 50%;">Participante:</span>
<div style="left:457.5px;top:659px;width:60.0px;height:28.5px;border:1px solid #a9b2c0;box-shadow:inset 0 0 0 1px #bdd5f1;background:#fff;"></div>
<div style="left:520.5px;top:661.0px;width:23.5px;height:24.5px;background:#f8f8f8;border-radius:4.500px"></div>
<svg class="a" style="left:520.5px;top:661.5px" width="23" height="24" viewBox="0 0 23 24"><circle cx="9.900" cy="8.400" r="7" fill="#9e9e9e"/><path d="M13.500 13L20 20.800" stroke="#9e9e9e" stroke-width="3.400" stroke-linecap="butt"/></svg>
<div style="left:548px;top:659px;width:484px;height:28.5px;border:1px solid #a9b2c0;box-shadow:inset 0 0 0 1px #bdd5f1;background:#fff;"></div>
<div style="left:370px;top:696.8px;width:262px;height:59px;border-top:1px solid #808080;border-left:1px solid #6a6a6a;box-shadow:1px 1px 0 #fff;background:#999;"></div>
<div style="left:649px;top:696.8px;width:386.5px;height:59px;border-top:1px solid #808080;border-left:1px solid #6a6a6a;box-shadow:1px 1px 0 #fff;background:#999;"></div>
<div style="left:377.5px;top:703px;width:59px;height:47px;background:#fdfdfd;border-radius:5px;border:1px solid #ececec;"></div>
<svg class="a" style="left:397.0px;top:708px" width="20" height="19" viewBox="0 0 20 19"><rect width="20" height="19.500" fill="#9a9a9a"/><rect x="3.0" y="6.300" width="1" height="7.200" fill="#e6e6e6"/><path d="M8.3 9.9L11.9 7.300000000000001V9.0H18V10.8H11.9V12.5z" fill="#fafafa"/></svg>
<span class="t" style="top:730.80px;font-size:13.33px;line-height:17px;color:#7c8797;left:380.49px;transform:scaleX(0.9471);transform-origin:50% 50%;">Pr<u>i</u>meiro</span>
<div style="left:440px;top:703px;width:59px;height:47px;background:#fdfdfd;border-radius:5px;border:1px solid #ececec;"></div>
<svg class="a" style="left:459.5px;top:708px" width="20" height="19" viewBox="0 0 20 19"><rect width="20" height="19.500" fill="#9a9a9a"/><path d="M5.6 9.9L9.2 7.300000000000001V9.0H18V10.8H9.2V12.5z" fill="#fafafa"/></svg>
<span class="t" style="top:730.80px;font-size:13.33px;line-height:17px;color:#7c8797;left:444.46px;transform:scaleX(1.0135);transform-origin:50% 50%;"><u>A</u>nterior</span>
<div style="left:502.5px;top:703px;width:59px;height:47px;background:#fdfdfd;border-radius:5px;border:1px solid #ececec;"></div>
<svg class="a" style="left:522.0px;top:708px" width="20" height="19" viewBox="0 0 20 19"><rect width="20" height="19.500" fill="#9a9a9a"/><path d="M15.7 9.9L12.1 7.300000000000001V9.0H4.7V10.8H12.1V12.5z" fill="#fafafa"/></svg>
<span class="t" style="top:730.80px;font-size:13.33px;line-height:17px;color:#7c8797;left:505.55px;transform:scaleX(0.9491);transform-origin:50% 50%;"><u>P</u>róximo</span>
<div style="left:565.5px;top:703px;width:59px;height:47px;background:#fdfdfd;border-radius:5px;border:1px solid #ececec;"></div>
<svg class="a" style="left:585.0px;top:708px" width="20" height="19" viewBox="0 0 20 19"><rect width="20" height="19.500" fill="#9a9a9a"/><path d="M13 9.9L9.4 7.300000000000001V9.0H2.3V10.8H9.4V12.5z" fill="#fafafa"/><rect x="16.5" y="6.300" width="1" height="7.200" fill="#e6e6e6"/></svg>
<span class="t" style="top:730.80px;font-size:13.33px;line-height:17px;color:#7c8797;left:574.71px;transform:scaleX(0.9449);transform-origin:50% 50%;"><u>U</u>ltimo</span>
<div style="left:656.5px;top:703px;width:59px;height:47px;background:#fdfdfd;border-radius:5px;border:1px solid #2a7de1;"></div>
<div style="left:660.0px;top:706.3px;width:52.5px;height:40px;border:1px dotted #111"></div>
<svg class="a" style="left:676.5px;top:707px" width="22" height="22" viewBox="0 0 22 22"><path d="M2.800 2H11L15.200 6.200V20H2.800z" fill="#f5ead6" stroke="#d9ceb8" stroke-width="0.700"/><path d="M11 2V6.200H15.200z" fill="#e2d6bf"/><path d="M12.800 7.800V20.200M6.600 14H19" stroke="#2c4f2c" stroke-width="4.200"/><path d="M12.800 9V19M7.800 14H17.800" stroke="#5f9150" stroke-width="1.600"/></svg>
<span class="t" style="top:730.80px;font-size:13.33px;line-height:17px;color:#111;left:669.33px;transform:scaleX(0.9826);transform-origin:50% 50%;"><u>N</u>ovo</span>
<div style="left:719px;top:703px;width:59px;height:47px;background:#fdfdfd;border-radius:5px;border:1px solid #ececec;"></div>
<svg class="a" style="left:738px;top:706.300px" width="22" height="22" viewBox="0 0 22 22"><circle cx="11" cy="11.500" r="9.200" fill="#d4d6d3" stroke="#9a9e9a" stroke-width="1"/><circle cx="11" cy="11.500" r="6.800" fill="#5d7f50"/><path d="M4.800 12.500c1.500-1.500 3-3.500 6-3.300c2.500 0.200 4 1.800 5.500 1.500l-1 2.800c-2.500 1-4.500 0.200-6.500-0.300c-1.500-0.200-3 0-4-0.700z" fill="#f0d21c"/><path d="M5.500 8c2.500-3 8-3 11 0.500" stroke="#fafaf8" stroke-width="1.500" fill="none"/><path d="M12 6.500h4v2h-4z" fill="#3f6a3a"/></svg>
<span class="t" style="top:730.80px;font-size:13.33px;line-height:17px;color:#111;left:727.17px;transform:scaleX(1.0238);transform-origin:50% 50%;">Al<u>t</u>erar</span>
<div style="left:781.5px;top:703px;width:59px;height:47px;background:#fdfdfd;border-radius:5px;border:1px solid #ececec;"></div>
<svg class="a" style="left:800.5px;top:706.500px" width="22" height="22" viewBox="0 0 22 22"><path d="M3.800 3.800L18.200 18.700M18.200 3.800L3.800 18.700" stroke="#e9303a" stroke-width="5.400" stroke-linecap="round"/><path d="M3.800 3.800L7.500 7.500M18.200 3.800L14.500 7.500" stroke="#f29aa4" stroke-width="4.600" stroke-linecap="round"/></svg>
<span class="t" style="top:730.80px;font-size:13.33px;line-height:17px;color:#111;left:789.80px;transform:scaleX(0.9450);transform-origin:50% 50%;">E<u>x</u>cluir</span>
<div style="left:844.5px;top:703px;width:59px;height:47px;background:#fdfdfd;border-radius:5px;border:1px solid #ececec;"></div>
<svg class="a" style="left:864.0px;top:708px" width="20" height="19" viewBox="0 0 20 19"><rect width="20" height="19.500" fill="#9a9a9a"/><rect x="5.500" y="6" width="2.200" height="1" fill="#f0f0f0"/><rect x="9.600" y="6" width="2" height="1" fill="#f0f0f0"/></svg>
<span class="t" style="top:730.80px;font-size:13.33px;line-height:17px;color:#7c8797;left:851.83px;transform:scaleX(0.9914);transform-origin:50% 50%;"><u>G</u>ravar</span>
<div style="left:906.8px;top:703px;width:59px;height:47px;background:#f7f7f7;border-radius:5px;border:1px solid #ececec;"></div>
<svg class="a" style="left:926.3px;top:706.500px" width="22" height="22" viewBox="0 0 22 22"><path d="M3.800 3.800L18.200 18.700M18.200 3.800L3.800 18.700" stroke="#9a9a9a" stroke-width="5.400" stroke-linecap="round"/></svg>
<span class="t" style="top:730.80px;font-size:13.33px;line-height:17px;color:#7c8797;left:907.42px;transform:scaleX(0.9595);transform-origin:50% 50%;">Cance<u>l</u>ar</span>
<div style="left:969.3px;top:703px;width:59px;height:47px;background:#fdfdfd;border-radius:5px;border:1px solid #ececec;"></div>
<svg class="a" style="left:988.3px;top:707px" width="22" height="22" viewBox="0 0 22 22"><path d="M7 1H15L21 7V15L15 21H7L1 15V7z" fill="#e8323c"/><path d="M7 1H15L20.500 6.500H1.500z" fill="#f08a90"/><path d="M1 7.500L4.500 11L1 14.500zM21 7.500L17.500 11L21 14.500z" fill="#2a1010"/><path d="M2 7H20L17 11L20 15H2L5 11z" fill="#3a1414"/><path d="M7.400 7.400L14.600 14.600M14.600 7.400L7.400 14.600" stroke="#f4f0f0" stroke-width="3.200" stroke-linecap="round"/></svg>
<span class="t" style="top:730.80px;font-size:13.33px;line-height:17px;color:#111;left:984.75px;transform:scaleX(0.9071);transform-origin:50% 50%;"><u>S</u>air</span>
<div style="left:1039px;top:154px;width:117px;height:573.5px;border:1px solid #a0a0a0;box-shadow:1px 1px 0 #fff,inset 1px 1px 0 #fff;"></div>
<div style="left:1053.5px;top:169.5px;width:16px;height:16px;border:1px solid #8a8a8a;border-radius:50%;background:#fafafa"></div>
<span class="t" style="top:168.80px;font-size:13.33px;line-height:17px;color:#1c1c7e;font-weight:700;left:1074px;transform:scaleX(1.0796);transform-origin:0 50%;">Analí<u>t</u>ica</span>
<div style="left:1053.5px;top:189px;width:16px;height:16px;border-radius:50%;background:#0f62c0"></div>
<div style="left:1058px;top:193.5px;width:7px;height:7px;border-radius:50%;background:#fff"></div>
<span class="t" style="top:188.50px;font-size:13.33px;line-height:17px;color:#1c1c7e;font-weight:700;left:1074px;transform:scaleX(1.0799);transform-origin:0 50%;">Re<u>d</u>uzida</span>
<div style="left:1055px;top:213px;width:16px;height:16px;border:1px solid #6a6a6a;border-radius:3.500px;background:#fdfdfd"></div>
<span class="t" style="top:212.80px;font-size:13.33px;line-height:17px;color:#111;left:1074.6px;transform:scaleX(1.0523);transform-origin:0 50%;">Nº Arqui<u>v</u>.</span>
<div style="left:1048px;top:235.5px;width:101.5px;height:39.0px;background:#fdfdfd;border:1px solid #d2d2d2;border-bottom-color:#bcbcbc;border-radius:4px"></div>
<span class="t" style="top:238.30px;font-size:13.33px;line-height:17px;color:#111;left:1058.48px;">Lança<u>m</u>entos</span>
<span class="t" style="top:254.30px;font-size:13.33px;line-height:17px;color:#111;left:1061.33px;transform:scaleX(1.0089);transform-origin:50% 50%;">Automáticos</span>
<div style="left:1048px;top:280.5px;width:82.5px;height:35.5px;background:#fdfdfd;border:1px solid #d2d2d2;border-bottom-color:#bcbcbc;border-radius:4px"></div>
<div style="left:1132.5px;top:280.5px;width:19.0px;height:35.5px;background:#fdfdfd;border:1px solid #d2d2d2;border-bottom-color:#bcbcbc;border-radius:4px"></div>
<span class="t" style="top:289.60px;font-size:13.33px;line-height:17px;color:#111;left:1055.72px;transform:scaleX(0.9855);transform-origin:50% 50%;"><u>B</u>alancetes</span>
<svg class="a" style="left:1136px;top:293.5px" width="12" height="10" viewBox="0 0 12 10"><path d="M1.500 2.500L6 7L10.500 2.500" stroke="#444" stroke-width="1.100" fill="none"/></svg>
<div style="left:1048px;top:321.5px;width:101.5px;height:35.5px;background:#fdfdfd;border:1px solid #d2d2d2;border-bottom-color:#bcbcbc;border-radius:4px"></div>
<span class="t" style="top:330.60px;font-size:13.33px;line-height:17px;color:#111;left:1078.03px;transform:scaleX(0.9858);transform-origin:50% 50%;">Ra<u>z</u>ão</span>
<div style="left:1048px;top:363px;width:101.5px;height:35.5px;background:#f6f6f6;border:1px solid #e4e4e4;border-bottom-color:#e0e0e0;border-radius:4px"></div>
<span class="t" style="top:372.10px;font-size:13.33px;line-height:17px;color:#8a8a8a;left:1054.90px;transform:scaleX(1.0094);transform-origin:50% 50%;">Centr<u>o</u> Custos</span>
<div style="left:1048px;top:404px;width:101.5px;height:35.5px;background:#fdfdfd;border:1px solid #d2d2d2;border-bottom-color:#bcbcbc;border-radius:4px"></div>
<span class="t" style="top:413.10px;font-size:13.33px;line-height:17px;color:#111;left:1062.30px;transform:scaleX(1.0087);transform-origin:50% 50%;">Di<u>g</u>. Auxiliar</span>
<div style="left:1048px;top:445px;width:82.5px;height:35.5px;background:#fdfdfd;border:1px solid #d2d2d2;border-bottom-color:#bcbcbc;border-radius:4px"></div>
<div style="left:1132.5px;top:445px;width:19.0px;height:35.5px;background:#fdfdfd;border:1px solid #d2d2d2;border-bottom-color:#bcbcbc;border-radius:4px"></div>
<span class="t" style="top:454.10px;font-size:13.33px;line-height:17px;color:#111;left:1056.94px;transform:scaleX(0.9672);transform-origin:50% 50%;">Pes<u>q</u>uisas</span>
<svg class="a" style="left:1136px;top:458px" width="12" height="10" viewBox="0 0 12 10"><path d="M1.500 2.500L6 7L10.500 2.500" stroke="#444" stroke-width="1.100" fill="none"/></svg>
<div style="left:1048px;top:486px;width:101.5px;height:35.5px;background:#fdfdfd;border:1px solid #d2d2d2;border-bottom-color:#bcbcbc;border-radius:4px"></div>
<span class="t" style="top:495.10px;font-size:13.33px;line-height:17px;color:#111;left:1056.31px;transform:scaleX(0.9881);transform-origin:50% 50%;">Fixa<u>r</u> Campos</span>
<div style="left:1048px;top:527px;width:101.5px;height:35.5px;background:#fdfdfd;border:1px solid #d2d2d2;border-bottom-color:#bcbcbc;border-radius:4px"></div>
<span class="t" style="top:536.10px;font-size:13.33px;line-height:17px;color:#111;left:1052.17px;transform:scaleX(0.9927);transform-origin:50% 50%;"><u>L</u>istagem Conf.</span>
<div style="left:1040.5px;top:580px;width:115px;height:1px;background:#a0a0a0"></div>
<div style="left:1040.5px;top:581px;width:115px;height:1px;background:#fff"></div>
<div style="left:1043px;top:617px;width:109.5px;height:56.5px;border:1px solid #c6c6c6;box-shadow:1px 1px 0 #fff,inset 1px 1px 0 #fff"></div>
<div style="left:1056px;top:597.5px;width:84.5px;height:40.0px;background:#fdfdfd;border:1px solid #d2d2d2;border-bottom-color:#bcbcbc;border-radius:4px"></div>
<span class="t" style="top:599.30px;font-size:13.33px;line-height:17px;color:#111;left:1064.05px;">Tro<u>c</u>ar Mês</span>
<span class="t" style="top:615.30px;font-size:13.33px;line-height:17px;color:#111;left:1060.45px;transform:scaleX(0.9920);transform-origin:50% 50%;">da Digitação</span>
<div style="left:1046.5px;top:641px;width:104px;height:26.5px;border:1px solid #c4c4c4;background:#fff"></div>
<span class="t" style="top:645.50px;font-size:13.33px;line-height:17px;color:#111;font-weight:700;left:1052.5px;transform:scaleX(1.0965);transform-origin:0 50%;">Janeiro</span>
<div style="left:1128px;top:643.5px;width:20.5px;height:21.5px;border:1px solid #d8d8d8;background:#fdfdfd;border-radius:2px"></div>
<svg class="a" style="left:1132.5px;top:650px" width="12" height="10" viewBox="0 0 12 10"><path d="M1.500 2.500L6 7L10.500 2.500" stroke="#555" stroke-width="1.100" fill="none"/></svg>
<span class="t" style="top:676.00px;font-size:13.33px;line-height:17px;color:#111;left:1044.4px;transform:scaleX(1.0368);transform-origin:0 50%;">Dt. Arquivamento</span>
<div style="left:1044px;top:696px;width:108px;height:27.5px;border:1px solid #a9b2c0;box-shadow:inset 0 0 0 1px #bdd5f1;background:#fff;"></div>
<span class="t" style="top:700.30px;font-size:14.67px;line-height:18px;color:#808080;font-weight:700;left:1060.92px;transform:scaleX(1.1450);transform-origin:50% 50%;">20/01/2026</span>
</body></html>
